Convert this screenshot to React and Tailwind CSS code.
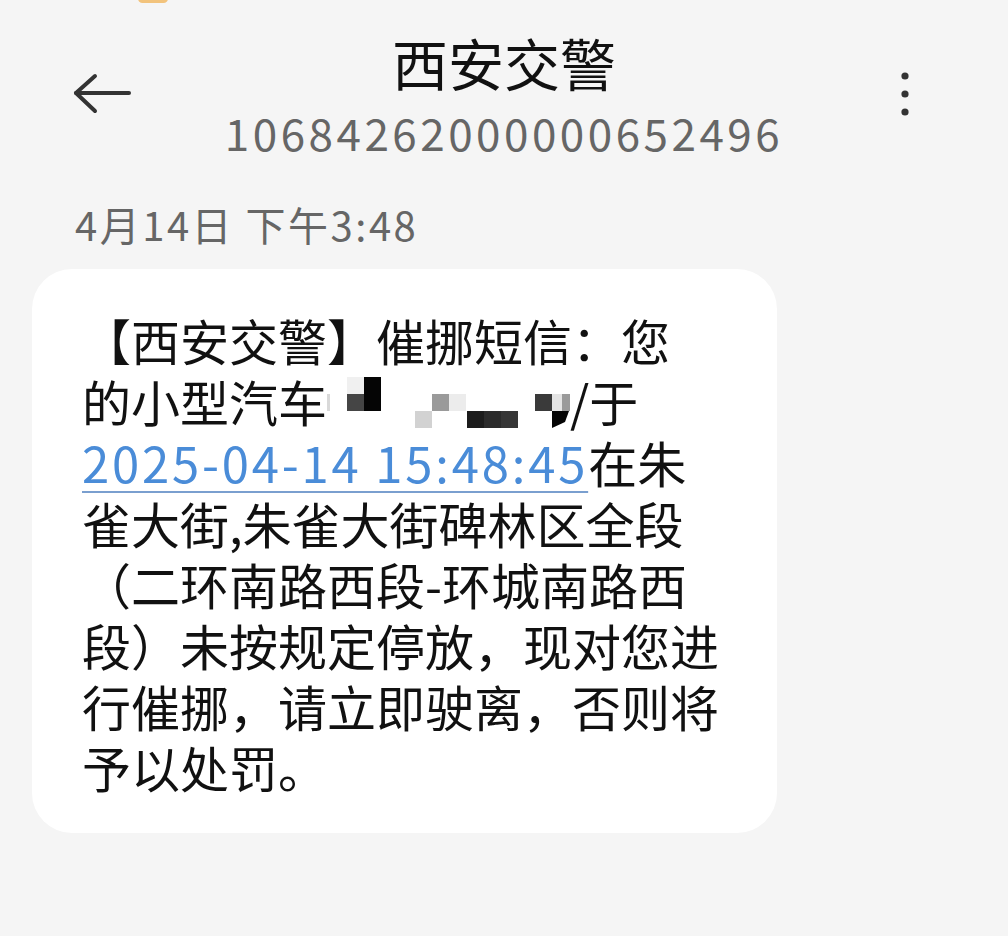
const Mosaic = () => (
	<svg width="243" height="61" viewBox="0 0 243 61" className="inline-block align-top">
		<rect x="0" y="24" width="3" height="17" fill="#d9d9d9" />
		<rect x="20" y="7" width="17" height="17" fill="#f0f0f0" />
		<rect x="20" y="24" width="17" height="17" fill="#454545" />
		<rect x="37" y="7" width="17" height="34" fill="#050505" />
		<rect x="88" y="41" width="17" height="17" fill="#d2d2d2" />
		<rect x="105" y="24" width="17" height="17" fill="#9a9a9a" />
		<rect x="122" y="24" width="17" height="17" fill="#ececec" />
		<rect x="140" y="41" width="17" height="17" fill="#1c1c1c" />
		<rect x="157" y="41" width="17" height="17" fill="#2b2b2b" />
		<rect x="174" y="41" width="17" height="17" fill="#363636" />
		<rect x="208" y="24" width="17" height="17" fill="#3a3a3a" />
		<rect x="225" y="24" width="10" height="17" fill="#e4e4e4" />
		<rect x="235" y="24" width="8" height="17" fill="#9a9a9a" />
		<path d="M225 41 H242 L238 52 L225 58 Z" fill="#050505" />
	</svg>
);

export default function App() {
	return (
		<div className="min-h-[936px] w-full bg-[#f5f5f5] font-['Noto_Sans_CJK_SC','Noto_Sans',sans-serif] text-[#111]">
			{/* status bar remnant */}
			<div className="relative h-[27px]">
				<div className="absolute left-[138px] -top-[6px] h-[9px] w-[30px] rounded-full bg-[#f2c37c]" />
			</div>

			{/* Header */}
			<div className="grid grid-cols-[130px_1fr_130px]">
				<div className="pl-[72px] pt-[46px]">
					<svg width="60" height="42" viewBox="0 0 60 42" fill="none" stroke="#333" strokeWidth="4" strokeLinecap="round" strokeLinejoin="round">
						<path d="M57 20 H4" />
						<path d="M23 3 L4 20 L23 38" />
					</svg>
				</div>
				<div className="flex flex-col items-center">
					<div className="text-[56px] leading-[70px] font-normal">西安交警</div>
					<div className="mt-[10px] text-[44px] leading-[50px] tracking-[3.5px] text-[#666]">10684262000000652496</div>
				</div>
				<div className="flex justify-end pr-[98px] pt-[45px]">
					<svg width="10" height="44" viewBox="0 0 10 44" fill="#333">
						<circle cx="5" cy="4" r="3.6" />
						<circle cx="5" cy="22" r="3.6" />
						<circle cx="5" cy="40" r="3.6" />
					</svg>
				</div>
			</div>

			{/* Date */}
			<div className="mt-[42px] pl-[75px] text-[40px] leading-[50px] tracking-[2.5px] text-[#666]">4月14日 下午3:48</div>

			{/* Message bubble */}
			<div className="ml-[32px] mt-[20px] w-[745px] rounded-[40px] bg-white pl-[50px] pt-[40px] pb-[36px]">
				<div className="text-[49px] leading-[61px] whitespace-nowrap">
					<div>【西安交警】催挪短信：您</div>
					<div>
						的小型汽车
						<Mosaic />
						/于
					</div>
					<div>
						<span className="text-[#4a8cd8] tracking-[2.8px] underline decoration-[#7a9fcf] decoration-2 underline-offset-[8px]">2025-04-14 15:48:45</span>
						在朱
					</div>
					<div>雀大街,朱雀大街碑林区全段</div>
					<div>（二环南路西段-环城南路西</div>
					<div>段）未按规定停放，现对您进</div>
					<div>行催挪，请立即驶离，否则将</div>
					<div>予以处罚。</div>
				</div>
			</div>
		</div>
	);
}
